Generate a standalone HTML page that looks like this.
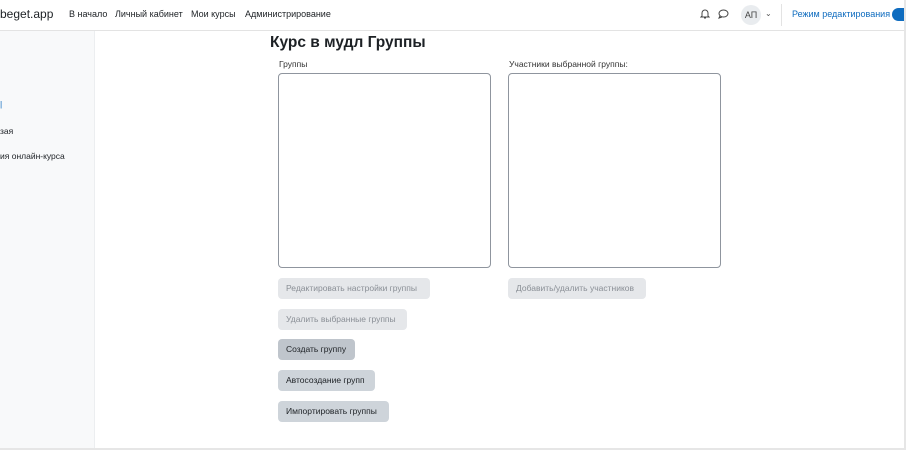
<!DOCTYPE html><html><head><meta charset="utf-8"><style>
body{margin:0;width:906px;height:450px;overflow:hidden;background:#fff;font-family:"Liberation Sans",sans-serif;color:#1d2125;position:relative}
.nav{position:absolute;left:0;top:0;width:904px;height:30px;border-bottom:1px solid #e3e3e3;background:#fff;overflow:hidden}
.nav span{position:absolute;top:9px;font-size:9px;white-space:nowrap}
.side{position:absolute;left:0;top:31px;width:94px;height:417px;background:#f8f9fa;border-right:1px solid #eceef0}
.side span{position:absolute;font-size:8.5px;left:0;white-space:nowrap}
.frame{position:absolute;right:0;top:0;width:2px;height:450px;background:#e6e6e6}
.bot{position:absolute;left:0;top:448px;width:906px;height:2px;background:#e6e6e6}
h1{position:absolute;left:270px;top:34px;margin:0;font-size:15.5px;font-weight:bold;white-space:nowrap}
.lbl{position:absolute;font-size:8.5px;color:#333;white-space:nowrap}
.box{position:absolute;border:1px solid #8f959e;border-radius:4px;background:#fff}
.b{position:absolute;height:21px;border-radius:4px;font-size:8.5px;line-height:21px;padding:0 8px;box-sizing:border-box;white-space:nowrap;overflow:hidden}
.dis{background:#e5e7ea;color:#8a8f96}
.en{background:#ced4da;color:#1d2125}
</style></head><body>
<div class="nav">
<span style="left:0;font-size:12px;top:7px">beget.app</span>
<span style="left:69px">В начало</span>
<span style="left:115px">Личный кабинет</span>
<span style="left:191px">Мои курсы</span>
<span style="left:245px">Администрирование</span>
<svg style="position:absolute;left:700px;top:8px" width="10" height="11" viewBox="0 0 10 11"><path d="M2 8V5a3 3 0 0 1 6 0v3l1 1H1z M4 10h2" fill="none" stroke="#444" stroke-width="1"/></svg>
<svg style="position:absolute;left:718px;top:9px" width="11" height="10" viewBox="0 0 11 10"><ellipse cx="5.5" cy="4.5" rx="4.5" ry="3.5" fill="none" stroke="#444"/><path d="M2 7l-1 2 3-1" fill="none" stroke="#444"/></svg>
<div style="position:absolute;left:741px;top:5px;width:20px;height:20px;border-radius:50%;background:#e9ecef;font-size:9px;line-height:20px;text-align:center;color:#444">АП</div>
<span style="left:765px;font-size:8px;top:9px;color:#555">&#8964;</span>
<div style="position:absolute;left:781px;top:4px;width:1px;height:22px;background:#e3e3e3"></div>
<span style="left:792px;color:#0f6cbf">Режим редактирования</span>
<div style="position:absolute;left:892px;top:8px;width:20px;height:13px;border-radius:7px;background:#0f6cbf"></div>
</div>
<div class="side"><span style="top:68px;color:#0f6cbf">|</span><span style="top:95px">зая</span><span style="top:120px">ия онлайн-курса</span></div>
<h1>Курс в мудл Группы</h1>
<div class="lbl" style="left:279px;top:59px">Группы</div>
<div class="lbl" style="left:509px;top:59px">Участники выбранной группы:</div>
<div class="box" style="left:278px;top:73px;width:211px;height:193px"></div>
<div class="box" style="left:508px;top:73px;width:211px;height:193px"></div>
<div class="b dis" style="left:278px;top:278px;width:152px">Редактировать настройки группы</div>
<div class="b dis" style="left:508px;top:278px;width:138px">Добавить/удалить участников</div>
<div class="b dis" style="left:278px;top:309px;width:129px">Удалить выбранные группы</div>
<div class="b en" style="left:278px;top:339px;width:77px;background:#bfc5cc">Создать группу</div>
<div class="b en" style="left:278px;top:370px;width:97px">Автосоздание групп</div>
<div class="b en" style="left:278px;top:401px;width:111px">Импортировать группы</div>
<div class="frame"></div><div class="bot"></div>
</body></html>
